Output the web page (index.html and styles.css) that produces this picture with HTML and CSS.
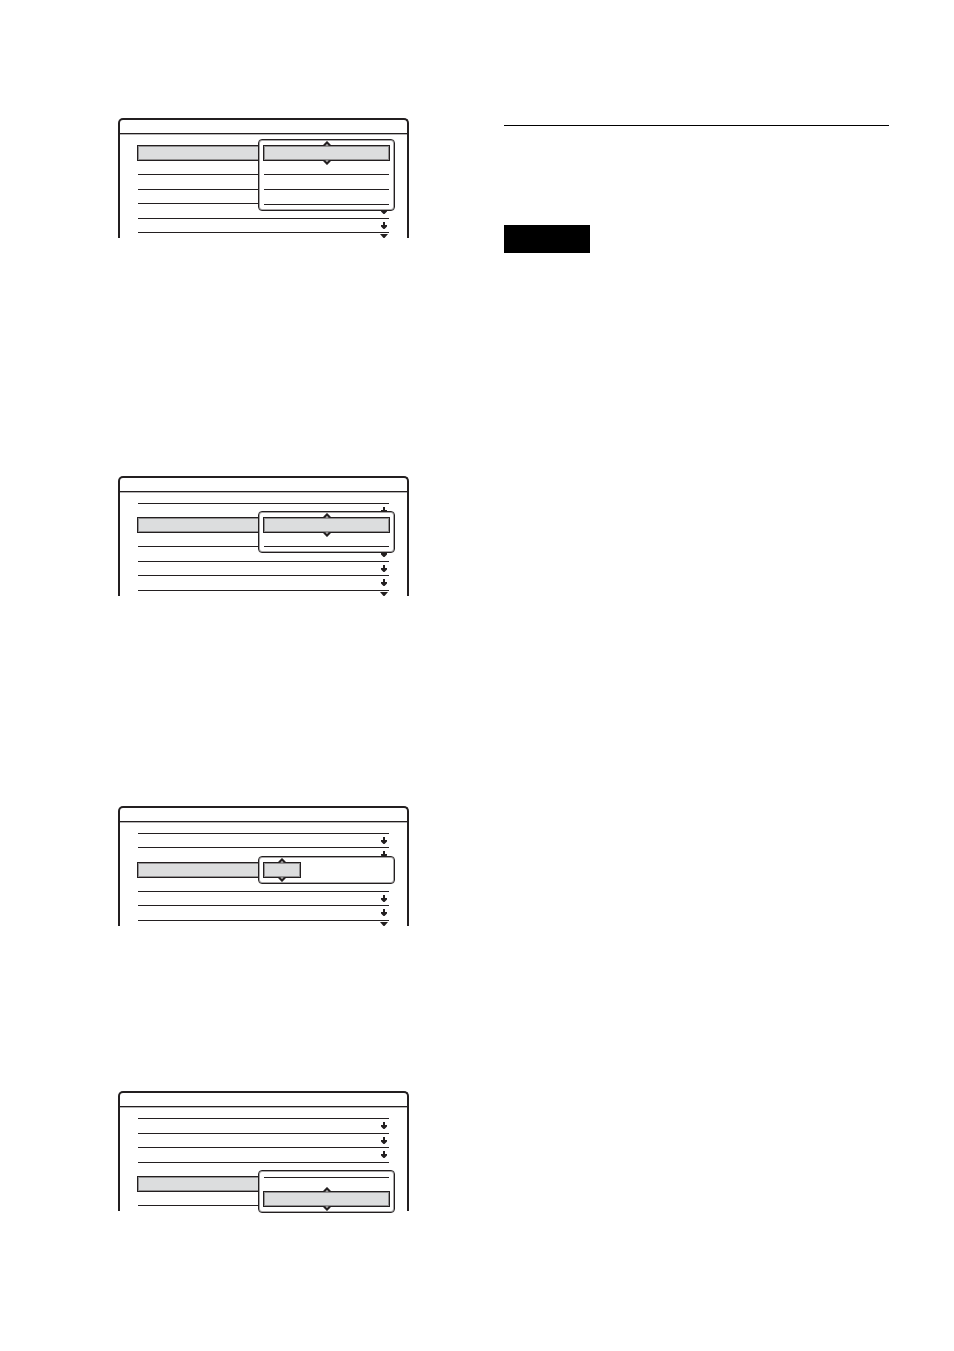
FILE: index.html
```html
<!DOCTYPE html>
<html lang="en">
  <head>
    <meta charset="utf-8" />
    <meta name="viewport" content="width=device-width, initial-scale=1" />
    <title>Menu</title>
    <link rel="stylesheet" href="styles.css">
  </head>
  <body>
    <!-- Shared icons -->
    <svg class="sprite" aria-hidden="true">
      <symbol id="arrow" viewBox="0 0 6 7">
        <path d="M2 0h2v3h2v1.500L3.500 7h-1L0 4.500V3h2z" />
      </symbol>
      <symbol id="more" viewBox="0 0 8 4">
        <path d="M0 0h8L4.500 4h-1z" />
      </symbol>
      <symbol id="caret" viewBox="0 0 8 5">
        <path d="M1 4.500L4 1.500 7 4.500" fill="#fff" stroke="#231f20" stroke-width="2.200" />
      </symbol>
    </svg>

    <main class="page">
      <div class="panels">
        <section class="panel">
          <div class="panel-title"></div>
          <ul class="menu">
            <li class="selected">
              <ul class="popup">
                <li class="option">
                  <svg class="caret up"><use href="#caret" /></svg>
                  <svg class="caret down"><use href="#caret" /></svg>
                </li>
                <li></li>
                <li></li>
                <li></li>
              </ul>
            </li>
            <li></li>
            <li></li>
            <li></li>
            <li><svg class="arrow"><use href="#arrow" /></svg></li>
            <li><svg class="arrow"><use href="#arrow" /></svg></li>
            <li><svg class="more"><use href="#more" /></svg></li>
          </ul>
        </section>

        <section class="panel">
          <div class="panel-title"></div>
          <ul class="menu short-first">
            <li><svg class="arrow"><use href="#arrow" /></svg></li>
            <li class="selected">
              <ul class="popup">
                <li class="option">
                  <svg class="caret up"><use href="#caret" /></svg>
                  <svg class="caret down"><use href="#caret" /></svg>
                </li>
                <li></li>
              </ul>
            </li>
            <li></li>
            <li><svg class="arrow"><use href="#arrow" /></svg></li>
            <li><svg class="arrow"><use href="#arrow" /></svg></li>
            <li><svg class="arrow"><use href="#arrow" /></svg></li>
            <li><svg class="more"><use href="#more" /></svg></li>
          </ul>
        </section>

        <section class="panel">
          <div class="panel-title"></div>
          <ul class="menu short-first">
            <li><svg class="arrow"><use href="#arrow" /></svg></li>
            <li><svg class="arrow"><use href="#arrow" /></svg></li>
            <li class="selected">
              <ul class="popup">
                <li class="option narrow">
                  <svg class="caret up"><use href="#caret" /></svg>
                  <svg class="caret down"><use href="#caret" /></svg>
                </li>
              </ul>
            </li>
            <li></li>
            <li><svg class="arrow"><use href="#arrow" /></svg></li>
            <li><svg class="arrow"><use href="#arrow" /></svg></li>
            <li><svg class="more"><use href="#more" /></svg></li>
          </ul>
        </section>

        <section class="panel">
          <div class="panel-title"></div>
          <ul class="menu">
            <li><svg class="arrow"><use href="#arrow" /></svg></li>
            <li><svg class="arrow"><use href="#arrow" /></svg></li>
            <li><svg class="arrow"><use href="#arrow" /></svg></li>
            <li></li>
            <li class="selected">
              <ul class="popup">
                <li class="above"></li>
                <li class="option">
                  <svg class="caret up"><use href="#caret" /></svg>
                  <svg class="caret down"><use href="#caret" /></svg>
                </li>
              </ul>
            </li>
            <li></li>
            <li></li>
          </ul>
        </section>
      </div>

      <div class="notes">
        <hr class="rule" />
        <div class="tag"></div>
      </div>
    </main>
  </body>
</html>
```

FILE: styles.css
```css
* {
  box-sizing: border-box;
}

body {
  margin: 0;
  background: #fff;
  font-family: "Liberation Sans", Arial, sans-serif;
}

ul {
  list-style: none;
  margin: 0;
  padding: 0;
}

svg {
  display: block;
  fill: #231f20;
}

.sprite {
  position: absolute;
  width: 0;
  height: 0;
}

.page {
  display: grid;
  grid-template-columns: 291fr 385fr;
  column-gap: 95px;
  padding: 118px 65px 118px 118px;
}

/* Menu panels */
.panel {
  border: 2px solid #231f20;
  border-bottom: none;
  border-radius: 5px 5px 0 0;
  margin-bottom: 238px;
}

.panel:nth-child(2) {
  margin-bottom: 210px;
}

.panel:nth-child(3) {
  margin-bottom: 165px;
}

.panel:last-child {
  margin-bottom: 0;
}

.panel-title {
  height: 14px;
  border-bottom: 1px solid #231f20;
  box-shadow: 0 1px #b5b4b5;
}

.menu {
  display: grid;
  grid-template-rows: repeat(3, 15px 14px) 6px;
  padding: 11px 18px 0;
}

.menu.short-first {
  grid-template-rows: repeat(3, 14px 15px) 6px;
}

.menu > li {
  border-top: 1px solid #231f20;
}

.menu > .selected {
  position: relative;
  height: 16px;
  margin-left: -1px;
  border: 1px solid #231f20;
  background: #dcddde;
  box-shadow: inset 0 0 0 1px #929192;
}

.menu > .selected + li {
  border-top: none;
}

.arrow {
  width: 6px;
  height: 7px;
  margin: 3px 2px 0 auto;
}

.more {
  width: 8px;
  height: 4px;
  margin: 1px 1px 0 auto;
}

/* Popup over the selected row */
.popup {
  position: absolute;
  top: -7px;
  right: -7px;
  z-index: 1;
  width: 137px;
  padding: 5px 4px;
  background: #fff;
  border: 1px solid #231f20;
  border-radius: 4px;
  box-shadow: inset 0 0 0 1px #a7a5a6;
}

.popup li {
  height: 14px;
  margin: 0 1px;
  border-bottom: 1px solid #231f20;
}

.popup li + li + li {
  height: 15px;
}

.popup .above {
  margin-top: 1px;
  border-top: 1px solid #231f20;
  border-bottom: none;
}

.popup .option {
  position: relative;
  height: 16px;
  margin: 0;
  border: 1px solid #231f20;
  background: #dcddde;
  box-shadow: inset 0 0 0 1px #929192;
}

.popup .narrow {
  width: 38px;
}

.caret {
  position: absolute;
  left: calc(50% - 4px);
  width: 8px;
  height: 5px;
}

.caret.up {
  top: -5px;
}

.caret.down {
  bottom: -5px;
  transform: rotate(180deg);
}

/* Right column */
.rule {
  height: 1px;
  margin: 7px 0 99px;
  border: none;
  background: #000;
}

.tag {
  width: 86px;
  height: 28px;
  background: #000;
}
```
